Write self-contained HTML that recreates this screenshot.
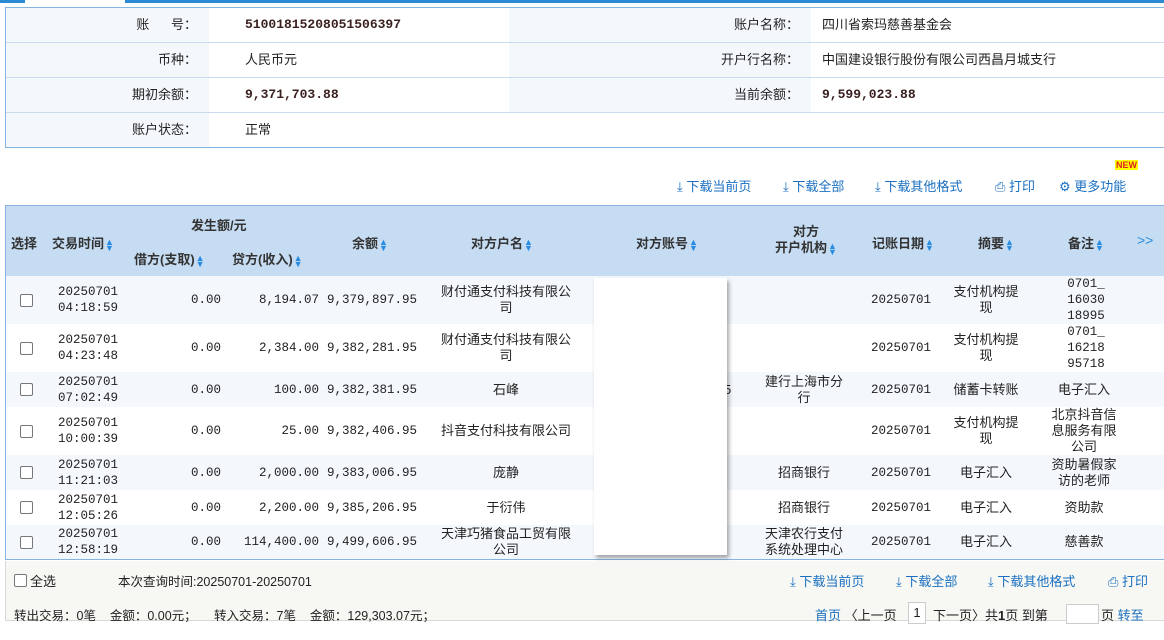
<!DOCTYPE html>
<html><head><meta charset="utf-8"><style>
*{margin:0;padding:0;box-sizing:border-box}
body{width:1164px;height:640px;background:#fff;font-family:"Liberation Sans","Noto Sans CJK SC",sans-serif;font-size:13px;color:#222;position:relative;overflow:hidden}
.a{position:absolute}
.info{left:5px;top:7px;width:1159px;height:141px;border:1px solid #86b4e0;border-right:none}
.ir{position:absolute;left:0;width:100%;height:35px;border-bottom:1px solid #c9dcef}
.lb{position:absolute;top:0;height:34px;line-height:34px;background:#f4f8fc;text-align:right;padding-right:12px}
.vl{position:absolute;top:0;height:34px;line-height:34px;padding-left:6px}
.num{font-family:"Liberation Mono","Noto Sans CJK SC",monospace;font-weight:bold;color:#3a1f1f;font-size:13px}
.link{color:#1a6fc0}
.hd{left:5px;top:205px;width:1159px;height:71px;background:#c6dcf3;border-top:1px solid #86b4e0;border-left:1px solid #86b4e0;font-weight:bold;color:#333}
.s{color:#2a8ce0;font-size:9px;display:inline-block;line-height:6px;vertical-align:middle;margin-left:1px}
.row{position:absolute;left:5px;width:1159px;border-left:1px solid #86b4e0}
.c{position:absolute;top:0;height:100%;display:flex;align-items:center;line-height:16px}
.cb{width:13px;height:13px;border:1px solid #777;border-radius:2px;background:#fff}
.mono{font-family:"Liberation Mono","Noto Sans CJK SC",monospace;font-size:12.5px}
</style></head><body>
<div class="a" style="left:0;top:0;width:25px;height:3px;background:#2a8ad4"></div>
<div class="a" style="left:125px;top:0;width:1039px;height:3px;background:#2a8ad4"></div>
<div class="a info">
 <div class="ir" style="top:0"><div class="lb" style="left:0;width:203px">账&nbsp;&nbsp;&nbsp;&nbsp;&nbsp;&nbsp;号：</div><div class="vl num" style="left:233px">51001815208051506397</div><div class="lb" style="left:503px;width:302px">账户名称：</div><div class="vl" style="left:810px">四川省索玛慈善基金会</div></div>
 <div class="ir" style="top:35px"><div class="lb" style="left:0;width:203px">币种：</div><div class="vl" style="left:233px">人民币元</div><div class="lb" style="left:503px;width:302px">开户行名称：</div><div class="vl" style="left:810px">中国建设银行股份有限公司西昌月城支行</div></div>
 <div class="ir" style="top:70px"><div class="lb" style="left:0;width:203px">期初余额：</div><div class="vl num" style="left:233px">9,371,703.88</div><div class="lb" style="left:503px;width:302px">当前余额：</div><div class="vl num" style="left:810px">9,599,023.88</div></div>
 <div class="ir" style="top:105px;border-bottom:none"><div class="lb" style="left:0;width:203px">账户状态：</div><div class="vl" style="left:233px">正常</div></div>
</div>
<div class="a" style="left:1115px;top:160px;font-size:9px;font-weight:bold;color:#d22;background:#ff0;line-height:10px;padding:0 1px">NEW</div>
<div class="a link" style="top:176px;left:677px">⤓ 下载当前页</div>
<div class="a link" style="top:176px;left:783px">⤓ 下载全部</div>
<div class="a link" style="top:176px;left:875px">⤓ 下载其他格式</div>
<div class="a link" style="top:176px;left:995px">⎙ 打印</div>
<div class="a link" style="top:176px;left:1059px">⚙ 更多功能</div>

<div class="a hd">
 <div class="a" style="left:5px;top:27px">选择</div>
 <div class="a" style="left:46px;top:27px">交易时间<span class="s">▲<br>▼</span></div>
 <div class="a" style="left:185px;top:9px">发生额/元</div>
 <div class="a" style="left:128px;top:43px">借方(支取)<span class="s">▲<br>▼</span></div>
 <div class="a" style="left:226px;top:43px">贷方(收入)<span class="s">▲<br>▼</span></div>
 <div class="a" style="left:346px;top:27px">余额<span class="s">▲<br>▼</span></div>
 <div class="a" style="left:465px;top:27px">对方户名<span class="s">▲<br>▼</span></div>
 <div class="a" style="left:630px;top:27px">对方账号<span class="s">▲<br>▼</span></div>
 <div class="a" style="left:769px;top:18px;text-align:center;line-height:16px">对方<br>开户机构<span class="s">▲<br>▼</span></div>
 <div class="a" style="left:866px;top:27px">记账日期<span class="s">▲<br>▼</span></div>
 <div class="a" style="left:972px;top:27px">摘要<span class="s">▲<br>▼</span></div>
 <div class="a" style="left:1062px;top:27px">备注<span class="s">▲<br>▼</span></div>
 <div class="a" style="left:1131px;top:26px;color:#2a8ce0;font-weight:normal;font-size:14px">&gt;&gt;</div>
</div>

<div class="row" style="top:276px;height:48px;background:#f4f8fc"><div class="c" style="left:14px"><div class="cb"></div></div><div class="c mono" style="left:52px">20250701<br>04:18:59</div><div class="c mono" style="left:130px;width:85px;justify-content:flex-end">0.00</div><div class="c mono" style="left:220px;width:93px;justify-content:flex-end">8,194.07</div><div class="c mono" style="left:315px;width:96px;justify-content:flex-end">9,379,897.95</div><div class="c" style="left:420px;width:160px;justify-content:center;text-align:center">财付通支付科技有限公<br>司</div><div class="c mono" style="left:860px;width:70px;justify-content:center">20250701</div><div class="c" style="left:947px;width:66px;justify-content:center;text-align:center">支付机构提<br>现</div><div class="c mono" style="left:1045px;width:70px;justify-content:center;text-align:center">0701_<br>16030<br>18995</div></div>
<div class="row" style="top:324px;height:48px;background:#fff"><div class="c" style="left:14px"><div class="cb"></div></div><div class="c mono" style="left:52px">20250701<br>04:23:48</div><div class="c mono" style="left:130px;width:85px;justify-content:flex-end">0.00</div><div class="c mono" style="left:220px;width:93px;justify-content:flex-end">2,384.00</div><div class="c mono" style="left:315px;width:96px;justify-content:flex-end">9,382,281.95</div><div class="c" style="left:420px;width:160px;justify-content:center;text-align:center">财付通支付科技有限公<br>司</div><div class="c mono" style="left:860px;width:70px;justify-content:center">20250701</div><div class="c" style="left:947px;width:66px;justify-content:center;text-align:center">支付机构提<br>现</div><div class="c mono" style="left:1045px;width:70px;justify-content:center;text-align:center">0701_<br>16218<br>95718</div></div>
<div class="row" style="top:372px;height:35px;background:#f4f8fc"><div class="c" style="left:14px"><div class="cb"></div></div><div class="c mono" style="left:52px">20250701<br>07:02:49</div><div class="c mono" style="left:130px;width:85px;justify-content:flex-end">0.00</div><div class="c mono" style="left:220px;width:93px;justify-content:flex-end">100.00</div><div class="c mono" style="left:315px;width:96px;justify-content:flex-end">9,382,381.95</div><div class="c" style="left:420px;width:160px;justify-content:center">石峰</div><div class="c" style="left:718px">5</div><div class="c" style="left:756px;width:84px;justify-content:center;text-align:center">建行上海市分<br>行</div><div class="c mono" style="left:860px;width:70px;justify-content:center">20250701</div><div class="c" style="left:942px;width:76px;justify-content:center">储蓄卡转账</div><div class="c" style="left:1043px;width:70px;justify-content:center">电子汇入</div></div>
<div class="row" style="top:407px;height:48px;background:#fff"><div class="c" style="left:14px"><div class="cb"></div></div><div class="c mono" style="left:52px">20250701<br>10:00:39</div><div class="c mono" style="left:130px;width:85px;justify-content:flex-end">0.00</div><div class="c mono" style="left:220px;width:93px;justify-content:flex-end">25.00</div><div class="c mono" style="left:315px;width:96px;justify-content:flex-end">9,382,406.95</div><div class="c" style="left:420px;width:160px;justify-content:center">抖音支付科技有限公司</div><div class="c mono" style="left:860px;width:70px;justify-content:center">20250701</div><div class="c" style="left:947px;width:66px;justify-content:center;text-align:center">支付机构提<br>现</div><div class="c" style="left:1043px;width:70px;justify-content:center;text-align:center">北京抖音信<br>息服务有限<br>公司</div></div>
<div class="row" style="top:455px;height:35px;background:#f4f8fc"><div class="c" style="left:14px"><div class="cb"></div></div><div class="c mono" style="left:52px">20250701<br>11:21:03</div><div class="c mono" style="left:130px;width:85px;justify-content:flex-end">0.00</div><div class="c mono" style="left:220px;width:93px;justify-content:flex-end">2,000.00</div><div class="c mono" style="left:315px;width:96px;justify-content:flex-end">9,383,006.95</div><div class="c" style="left:420px;width:160px;justify-content:center">庞静</div><div class="c" style="left:756px;width:84px;justify-content:center">招商银行</div><div class="c mono" style="left:860px;width:70px;justify-content:center">20250701</div><div class="c" style="left:947px;width:66px;justify-content:center">电子汇入</div><div class="c" style="left:1043px;width:70px;justify-content:center;text-align:center">资助暑假家<br>访的老师</div></div>
<div class="row" style="top:490px;height:35px;background:#fff"><div class="c" style="left:14px"><div class="cb"></div></div><div class="c mono" style="left:52px">20250701<br>12:05:26</div><div class="c mono" style="left:130px;width:85px;justify-content:flex-end">0.00</div><div class="c mono" style="left:220px;width:93px;justify-content:flex-end">2,200.00</div><div class="c mono" style="left:315px;width:96px;justify-content:flex-end">9,385,206.95</div><div class="c" style="left:420px;width:160px;justify-content:center">于衍伟</div><div class="c" style="left:756px;width:84px;justify-content:center">招商银行</div><div class="c mono" style="left:860px;width:70px;justify-content:center">20250701</div><div class="c" style="left:947px;width:66px;justify-content:center">电子汇入</div><div class="c" style="left:1043px;width:70px;justify-content:center">资助款</div></div>
<div class="row" style="top:525px;height:35px;background:#f4f8fc;border-bottom:1px solid #86b4e0"><div class="c" style="left:14px"><div class="cb"></div></div><div class="c mono" style="left:52px">20250701<br>12:58:19</div><div class="c mono" style="left:130px;width:85px;justify-content:flex-end">0.00</div><div class="c mono" style="left:220px;width:93px;justify-content:flex-end">114,400.00</div><div class="c mono" style="left:315px;width:96px;justify-content:flex-end">9,499,606.95</div><div class="c" style="left:420px;width:160px;justify-content:center;text-align:center">天津巧猪食品工贸有限<br>公司</div><div class="c" style="left:752px;width:92px;justify-content:center;text-align:center">天津农行支付<br>系统处理中心</div><div class="c mono" style="left:860px;width:70px;justify-content:center">20250701</div><div class="c" style="left:947px;width:66px;justify-content:center">电子汇入</div><div class="c" style="left:1043px;width:70px;justify-content:center">慈善款</div></div>

<div class="a" style="left:594px;top:278px;width:133px;height:277px;background:#fff;box-shadow:2px 3px 4px rgba(0,0,0,.35)"></div>

<div class="a" style="left:5px;top:561px;width:1159px;height:60px;background:#f7f8f4;border-left:1px solid #d8d8d8;border-bottom:1px solid #d8d8d8"></div>
<div class="a" style="left:14px;top:571px;display:flex;align-items:center"><div class="cb" style="margin-right:3px"></div>全选</div>
<div class="a" style="left:118px;top:571px;font-size:12.5px">本次查询时间:20250701-20250701</div>
<div class="a link" style="top:571px;left:790px">⤓ 下载当前页</div>
<div class="a link" style="top:571px;left:896px">⤓ 下载全部</div>
<div class="a link" style="top:571px;left:988px">⤓ 下载其他格式</div>
<div class="a link" style="top:571px;left:1108px">⎙ 打印</div>
<div class="a" style="left:14px;top:605px;font-size:12.5px">转出交易：0笔&nbsp;&nbsp;&nbsp;&nbsp;金额：0.00元；&nbsp;&nbsp;&nbsp;&nbsp;&nbsp;转入交易：7笔&nbsp;&nbsp;&nbsp;&nbsp;金额：129,303.07元；</div>
<div class="a" style="left:815px;top:605px"><span class="link">首页</span> 〈上一页</div>
<div class="a" style="left:908px;top:602px;width:18px;height:22px;border:1px solid #ccc;background:#fff;text-align:center;line-height:20px">1</div>
<div class="a" style="left:933px;top:605px">下一页〉共<b>1</b>页 到第</div>
<div class="a" style="left:1066px;top:604px;width:33px;height:20px;border:1px solid #ccc;background:#fff"></div>
<div class="a" style="left:1101px;top:605px">页 <span class="link">转至</span></div>
</body></html>
